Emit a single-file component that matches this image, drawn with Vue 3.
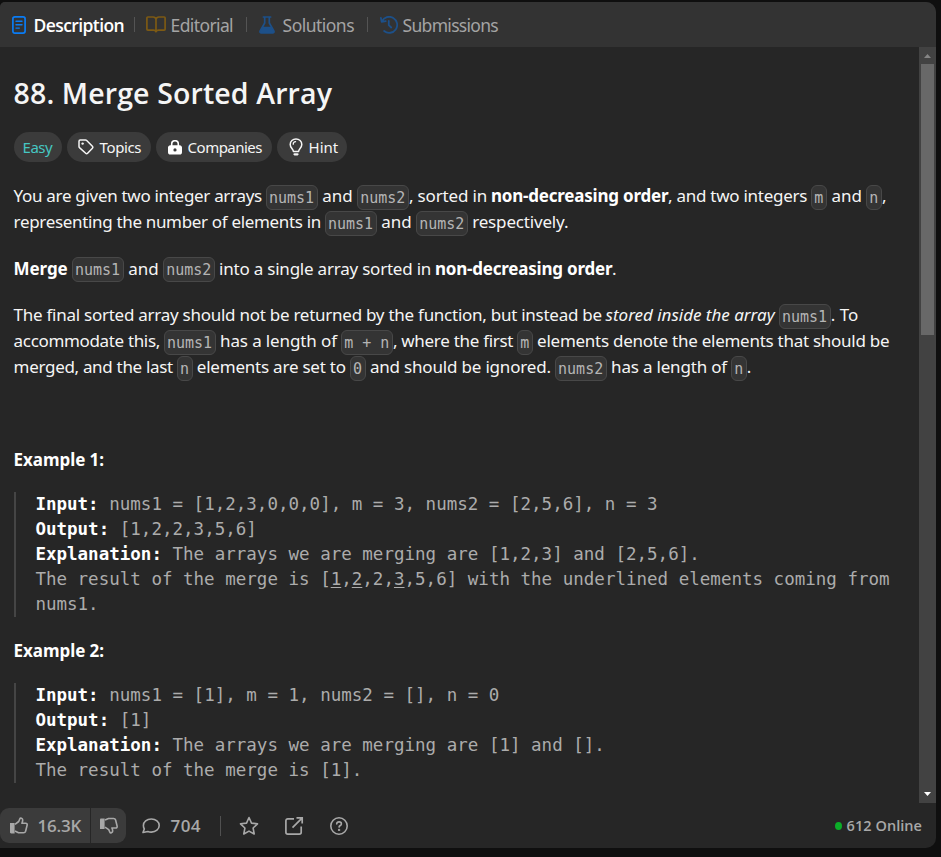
<script setup>
// Spreads the letters of a run so that it takes exactly the given advance width.
const vFit = {
  mounted(el, { value }) {
    const natural = el.getBoundingClientRect().width
    el.style.letterSpacing = (value - natural) / el.textContent.length + 'px'
    el.style.width = value + 'px'
  }
}

const tabs = [
  { id: 'description', label: 'Description', fit: 90 },
  { id: 'editorial', label: 'Editorial', fit: 62 },
  { id: 'solutions', label: 'Solutions', fit: 71 },
  { id: 'submissions', label: 'Submissions', fit: 95 }
]

const t = (text, w) => ({ text, w, kind: 'plain' })
const b = (text, w) => ({ text, w, kind: 'bold' })
const i = (text, w) => ({ text, w, kind: 'italic' })
const c = (text) => ({ text, kind: 'code' })

const paragraphs = [
  {
    id: 'intro',
    lines: [
      [t('You are given two integer arrays ', 252), c('nums1'), t(' and ', 39), c('nums2'), t(', sorted in ', 82), b('non-decreasing order', 177), t(', and two integers ', 143), c('m'), t(' and ', 39), c('n'), t(',', 4)],
      [t('representing the number of elements in ', 311), c('nums1'), t(' and ', 39), c('nums2'), t(' respectively.', 100)]
    ]
  },
  {
    id: 'task',
    lines: [
      [b('Merge ', 58), c('nums1'), t(' and ', 39), c('nums2'), t(' into a single array sorted in ', 220), b('non-decreasing order', 177), t('.', 4)]
    ]
  },
  {
    id: 'details',
    lines: [
      [t('The final sorted array should not be returned by the function, but instead be ', 592), i('stored inside the array ', 173), c('nums1'), t('. To', 27)],
      [t('accommodate this, ', 150), c('nums1'), t(' has a length of ', 125), c('m + n'), t(', where the first ', 124), c('m'), t(' elements denote the elements that should be', 356)],
      [t('merged, and the last ', 163), c('n'), t(' elements are set to ', 157), c('0'), t(' and should be ignored. ', 189), c('nums2'), t(' has a length of ', 124), c('n'), t('.', 4)]
    ]
  }
]
</script>

<template>
  <div class="page">
    <section class="panel">
      <nav class="tabs">
        <template v-for="(tab, n) in tabs" :key="tab.id">
          <span v-if="n" class="tab-sep"></span>
          <div class="tab" :class="tab.id">
            <svg v-if="tab.id === 'description'" width="14" height="18" viewBox="0 0 14 18" fill="none" stroke="#0a7cf5" stroke-width="1.7" stroke-linecap="round">
              <rect x=".9" y=".9" width="12.2" height="16.2" rx="2" />
              <path d="M4 5.3h6M4 8.7h6M4 12.1h3.3" stroke-width="1.4" />
            </svg>
            <svg v-else-if="tab.id === 'editorial'" width="20" height="17" viewBox="0 0 20 17" fill="none" stroke="#7d5a14" stroke-width="1.7" stroke-linejoin="round">
              <path d="M10 3.2C9.6 1.7 8.6 1 7.2 1H1.8a.9.9 0 0 0-.9.9v11.4c0 .5.4.9.9.9h5.6c1.3 0 2.2.5 2.6 1.6.4-1.1 1.3-1.6 2.6-1.6h5.6c.5 0 .9-.4.9-.9V1.9a.9.9 0 0 0-.9-.9h-5.4C11.4 1 10.4 1.7 10 3.2zV15" />
            </svg>
            <svg v-else-if="tab.id === 'solutions'" width="16" height="18" viewBox="0 0 16 18">
              <path d="M4.4 1h7.2M5.7 1v6L1.2 15c-.5 1 0 2 1.2 2h11.2c1.2 0 1.7-1 1.2-2L10.3 7V1" fill="none" stroke="#1d5089" stroke-width="1.7" stroke-linecap="round" />
              <path d="M3.8 10.8h8.4l2.6 4.7c.3.8-.2 1.5-1.1 1.5H2.3c-.9 0-1.4-.7-1.1-1.5z" fill="#1d5089" />
            </svg>
            <svg v-else width="18" height="18" viewBox="0 0 18 18" fill="none" stroke="#1d5089" stroke-width="1.8" stroke-linecap="round" stroke-linejoin="round">
              <path d="M2 5.3A8 8 0 1 1 4.1 15M.9 1.9l.8 4 4-.7M8.8 5v4.2l2.4 2.3" />
            </svg>
            <span v-fit="tab.fit" class="run">{{ tab.label }}</span>
          </div>
        </template>
      </nav>

      <div class="body">
        <main class="content">
          <h1><span v-fit="318" class="run">88. Merge Sorted Array</span></h1>

          <div class="pills">
            <span class="pill easy"><span v-fit="29" class="run">Easy</span></span>
            <span class="pill topics">
              <svg width="16" height="16" viewBox="0 0 16 16" fill="none" stroke="#f5f5f5" stroke-width="1.5" stroke-linejoin="round">
                <path d="M1 2.2C1 1.5 1.5 1 2.2 1h5.3c.5 0 .9.2 1.2.5l5.7 5.8c.6.6.6 1.3 0 1.9l-4.8 5c-.6.6-1.3.6-1.9 0L1.5 8.6C1.2 8.3 1 7.9 1 7.4z" />
                <circle cx="4.6" cy="4.6" r="1.2" fill="#f5f5f5" stroke="none" />
              </svg>
              <span v-fit="41" class="run">Topics</span>
            </span>
            <span class="pill companies">
              <svg width="14" height="15" viewBox="0 0 14 15">
                <path d="M3.7 6V4a3.3 3.3 0 0 1 6.6 0v2" fill="none" stroke="#fff" stroke-width="1.6" />
                <path fill-rule="evenodd" d="M2.3 5.3h9.4C13 5.3 14 6.3 14 7.6v4.6c0 1.4-.9 2.4-2.3 2.4H2.3C.9 14.6 0 13.6 0 12.2V7.6C0 6.3 1 5.3 2.3 5.3zM7 8.3a1.6 1.6 0 1 0 0 3.2 1.6 1.6 0 0 0 0-3.2z" fill="#fff" />
              </svg>
              <span v-fit="74" class="run">Companies</span>
            </span>
            <span class="pill hint">
              <svg width="14" height="18" viewBox="0 0 14 18" fill="none" stroke="#f5f5f5" stroke-width="1.5" stroke-linecap="round">
                <path d="M4.4 13.4c0-2.2-3.2-3.4-3.2-7a5.8 5.5 0 0 1 11.6 0c0 3.6-3.2 4.8-3.2 7z" stroke-linejoin="round" />
                <path d="M4.2 6.3c0-1.5.9-2.5 2.4-2.6" stroke-width="1.2" />
                <path d="M5.5 16.3h3" stroke-width="2.2" />
              </svg>
              <span v-fit="29" class="run">Hint</span>
            </span>
          </div>

          <div v-for="p in paragraphs" :key="p.id" class="para" :class="p.id">
            <div v-for="(line, l) in p.lines" :key="l" class="line">
              <template v-for="(s, k) in line" :key="k">
                <code v-if="s.kind === 'code'">{{ s.text }}</code>
                <span v-else v-fit="s.w" class="run" :class="s.kind">{{ s.text }}</span>
              </template>
            </div>
          </div>

          <h2 class="first"><span v-fit="90" class="run">Example 1:</span></h2>
          <pre><b>Input:</b> nums1 = [1,2,3,0,0,0], m = 3, nums2 = [2,5,6], n = 3
<b>Output:</b> [1,2,2,3,5,6]
<b>Explanation:</b> The arrays we are merging are [1,2,3] and [2,5,6].
The result of the merge is [<u>1</u>,<u>2</u>,2,<u>3</u>,5,6] with the underlined elements coming from
nums1.</pre>
          <h2><span v-fit="90" class="run">Example 2:</span></h2>
          <pre><b>Input:</b> nums1 = [1], m = 1, nums2 = [], n = 0
<b>Output:</b> [1]
<b>Explanation:</b> The arrays we are merging are [1] and [].
The result of the merge is [1].</pre>
        </main>

        <div class="scrollbar">
          <svg class="arrow" width="17" height="17" viewBox="0 0 17 17"><path d="M5 11l3.5-4 3.5 4z" fill="#858585" /></svg>
          <div class="thumb"></div>
          <svg class="arrow" width="17" height="17" viewBox="0 0 17 17"><path d="M5 6h7l-3.5 4z" fill="#fff" /></svg>
        </div>
      </div>

      <footer>
        <div class="votes">
          <button class="up">
            <svg width="18" height="17" viewBox="0 0 18 17">
              <path d="M0 6h4.6v10.5H1.2C.5 16.5 0 16 0 15.3z" fill="#a8a8a8" />
              <path d="M5 7.3L8.7 4.5 10 1.5c.3-.7 2.7-.4 2.7 1.4 0 1.3-.4 2.3-.8 3.3h3.7c1.2 0 1.8.9 1.5 2l-1.5 6c-.3 1-1 1.5-2 1.5H8.5L5 14" fill="none" stroke="#a8a8a8" stroke-width="1.6" stroke-linejoin="round" />
            </svg>
            <span v-fit="43" class="run">16.3K</span>
          </button>
          <button class="down">
            <svg width="18" height="17" viewBox="0 0 18 17">
              <path d="M0 2.7C0 2 .5 1.5 1.2 1.5h3.4V12H0z" fill="#a8a8a8" />
              <path d="M5 10.2l3.7 2.5L10 15.5c.3.7 2.7.4 2.7-1.4 0-1.2-.4-2.2-.8-3.1h3.7c1.2 0 1.8-.9 1.5-2l-1.500-6c-.3-1-1-1.500-2-1.500H8.500L5 3" fill="none" stroke="#a8a8a8" stroke-width="1.6" stroke-linejoin="round" />
            </svg>
          </button>
        </div>
        <svg class="bubble" width="18" height="16" viewBox="0 0 18 16" fill="none" stroke="#a8a8a8" stroke-width="1.6" stroke-linejoin="round">
          <path d="M9.3 1c4.5 0 7.9 2.7 7.9 6.5s-3.4 6.6-7.9 6.6c-1.2 0-2.4-.2-3.4-.6L1 14.5l1.3-3.6C1.7 9.9 1.4 8.7 1.4 7.5 1.4 3.7 4.8 1 9.3 1z" />
        </svg>
        <span v-fit="30" class="run count">704</span>
        <span class="foot-sep"></span>
        <svg class="star" width="20" height="20" viewBox="0 0 20 20" fill="none" stroke="#a8a8a8" stroke-width="1.6" stroke-linejoin="round">
          <path d="M10 1.5l2.5 5.6 6 .7-4.4 4.2 1.1 6L10 15.1 4.8 18l1.1-6L1.5 7.8l6-.7z" />
        </svg>
        <svg class="share" width="20" height="20" viewBox="0 0 20 20" fill="none" stroke="#a8a8a8" stroke-width="1.7">
          <path d="M10 2.9H3.8C2.7 2.9 1.9 3.7 1.9 4.8v11.5c0 1.1.8 1.9 1.9 1.9h11.500c1.100 0 1.900-.8 1.900-1.900v-5.800M12.500 1.900h5.700v5.700M18 2.100l-9.500 9.500" />
        </svg>
        <svg class="help" width="20" height="20" viewBox="0 0 20 20" fill="none" stroke="#a8a8a8" stroke-width="1.6" stroke-linecap="round">
          <circle cx="10" cy="10" r="8.2" />
          <path d="M7.7 7.9c.1-1.3 1.1-2 2.4-2s2.3.8 2.3 2c0 1.6-2.3 1.6-2.3 3.2" />
          <circle cx="10.1" cy="13.9" r=".4" />
        </svg>
        <span class="dot"></span>
        <span v-fit="75" class="run online">612 Online</span>
      </footer>
    </section>
  </div>
</template>

<style>
body {
  margin: 0;
  background: #0f0f0f;
}
</style>

<style scoped>
.page {
  width: 941px;
  height: 857px;
  box-sizing: border-box;
  padding-top: 2px;
  background: #0f0f0f;
  overflow: hidden;
  font-family: "Noto Sans", "Open Sans", sans-serif;
  color: #f5f5f5;
}
.panel {
  width: 936px;
  height: 846px;
  display: flex;
  flex-direction: column;
  background: #262626;
  border-radius: 5px 10px 10px 0;
  overflow: hidden;
}
.run {
  display: inline-block;
  white-space: pre;
  flex: none;
  text-indent: -.4px;
}
.tabs {
  height: 45px;
  flex: none;
  display: flex;
  align-items: center;
  background: #333;
  padding-left: 12px;
  font-size: 17.5px;
  color: #a4a4a4;
}
.tab {
  display: flex;
  align-items: center;
  height: 26px;
  line-height: 26px;
}
.description { gap: 8px; font-family: "Open Sans", sans-serif; font-weight: 600; color: #fff; }
.editorial { gap: 5px; }
.solutions { gap: 8px; }
.submissions { gap: 5px; }
.tab-sep {
  width: 1px;
  height: 15px;
  margin: 0 11px 0 10px;
  background: #545454;
}
.editorial + .tab-sep,
.solutions + .tab-sep { margin: 0 12px 0 13px; }
.body {
  height: 756px;
  flex: none;
  display: flex;
}
.content {
  width: 919px;
  box-sizing: border-box;
  padding: 25px 0 0 14px;
  overflow: hidden;
}
h1 {
  margin: 0 0 18px;
  height: 42px;
  line-height: 42px;
  font-family: "Open Sans", sans-serif;
  font-size: 28.5px;
  font-weight: 600;
}
.pills {
  display: flex;
  gap: 5px;
  height: 30px;
  margin-bottom: 21px;
  font-size: 15px;
  line-height: 30px;
}
.pill {
  box-sizing: border-box;
  display: flex;
  align-items: center;
  border-radius: 15px;
  background: #3b3b3b;
}
.easy { width: 48px; padding-left: 9px; color: #46c6c2; }
.topics { width: 84px; padding-left: 11px; gap: 6px; }
.companies { width: 116px; padding-left: 12px; gap: 6px; }
.hint { width: 70px; padding-left: 12px; gap: 6px; }
.para { font-size: 17px; }
.intro { margin-bottom: 21px; }
.task { margin-bottom: 20px; }
.line {
  display: flex;
  height: 26px;
  line-height: 26px;
  white-space: pre;
}
.bold { font-weight: 700; color: #fff; }
.italic { font-style: italic; }
code {
  flex: none;
  box-sizing: border-box;
  height: 25px;
  margin-top: 2px;
  padding: 0 3px 0 2px;
  border: 1px solid #484848;
  border-radius: 6px;
  background: #343434;
  color: #b4b4b4;
  font: 15px/25px "DejaVu Sans Mono", monospace;
}
.task code { margin-top: 1px; }
h2 {
  margin: 0 0 19px;
  height: 26px;
  line-height: 26px;
  font-size: 17px;
  font-weight: 700;
  color: #fff;
}
h2.first { margin-top: 67px; }
pre {
  margin: 0 0 21px;
  padding-left: 19.4px;
  border-left: 2px solid #454545;
  color: #acacac;
  font: 17.5px/25px "DejaVu Sans Mono", monospace;
  letter-spacing: .01px;
}
pre b { color: #fff; }
u { text-underline-offset: 2px; text-decoration-thickness: 1px; }
.scrollbar {
  width: 17px;
  display: flex;
  flex-direction: column;
  align-items: center;
  background: #424242;
}
.arrow { flex: none; }
.arrow:last-child { margin-top: auto; }
.thumb {
  width: 13px;
  height: 271px;
  background: #686868;
}
footer {
  height: 45px;
  display: flex;
  align-items: center;
  font-family: "Open Sans", sans-serif;
  font-size: 17px;
  font-weight: 600;
  color: #a8a8a8;
}
.votes {
  display: flex;
  gap: 1px;
  height: 35px;
  border-radius: 9px;
  overflow: hidden;
}
button {
  display: flex;
  align-items: center;
  border: 0;
  margin: 0;
  background: #3b3b3b;
  color: inherit;
  font: inherit;
}
.up { width: 90px; padding: 0 0 0 10px; gap: 10px; }
.down { width: 35px; padding: 0 0 0 9px; }
.bubble { margin-left: 16px; }
.count { margin-left: 11px; }
.foot-sep {
  width: 1px;
  height: 20px;
  margin-left: 19px;
  background: #505050;
}
.star { margin-left: 18px; }
.share { margin-left: 25px; }
.help { margin-left: 25px; }
.dot {
  width: 7px;
  height: 8px;
  margin: 0 5px 0 auto;
  border-radius: 50%;
  background: #0bad28;
}
.online { font-size: 14.5px; margin-right: 14px; }
</style>
